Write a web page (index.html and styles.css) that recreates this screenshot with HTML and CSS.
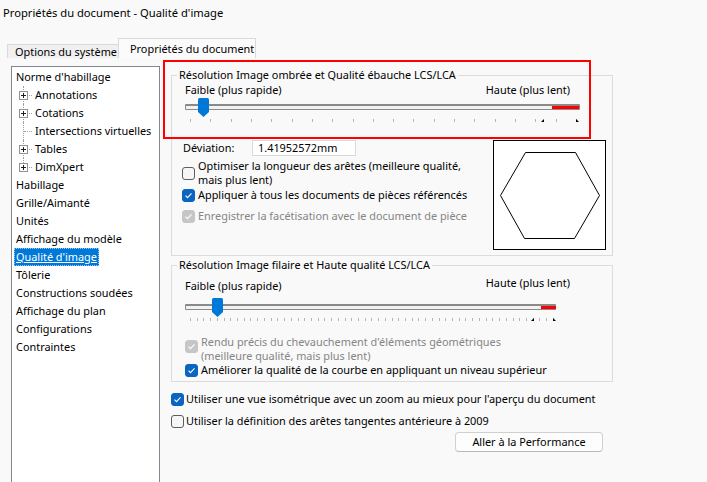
FILE: index.html
```html
<!DOCTYPE html>
<html lang="fr">
<head>
<meta charset="utf-8">
<title>Propriétés du document - Qualité d'image</title>
<link rel="stylesheet" href="styles.css">
</head>
<body>
<div class="window">
  <div class="title">Propriétés du document - Qualité d'image</div>
  <div class="tabs">
    <div class="tab">Options du système</div>
    <div class="tab active">Propriétés du document</div>
  </div>
  <div class="panel">
    <div class="tree">
      <div class="row">Norme d'habillage</div>
      <div class="row child"><span class="exp"></span>Annotations</div>
      <div class="row child"><span class="exp"></span>Cotations</div>
      <div class="row child">Intersections virtuelles</div>
      <div class="row child"><span class="exp"></span>Tables</div>
      <div class="row child last"><span class="exp"></span>DimXpert</div>
      <div class="row">Habillage</div>
      <div class="row">Grille/Aimanté</div>
      <div class="row">Unités</div>
      <div class="row">Affichage du modèle</div>
      <div class="row"><span class="sel">Qualité d'image</span></div>
      <div class="row">Tôlerie</div>
      <div class="row">Constructions soudées</div>
      <div class="row">Affichage du plan</div>
      <div class="row">Configurations</div>
      <div class="row">Contraintes</div>
    </div>
    <div class="content">
      <fieldset class="group g1">
        <legend>Résolution Image ombrée et Qualité ébauche LCS/LCA</legend>
        <div class="gin g1in">
          <div class="scale"><span>Faible (plus rapide)</span><span class="hi">Haute (plus lent)</span></div>
          <div class="slider s1">
            <div class="track"><div class="red"></div></div>
            <svg class="thumb" width="11" height="19" viewBox="0 0 11 19"><path d="M1.5 0H9.5Q11 0 11 1.5V14L5.5 19L0 14V1.5Q0 0 1.5 0Z"/></svg>
            <div class="ticks"><i></i><i></i><i></i><i></i><i></i><i></i><i></i><i></i><i></i><i></i><i></i><i></i><i></i><i></i><i></i><i></i><i></i><i></i><i></i><i></i></div>
            <span class="mk mk-a"></span><span class="mk mk-b"></span>
          </div>
          <div class="lower">
            <div class="opts">
              <div class="dev"><span class="devlabel">Déviation:</span><div class="input">1.41952572mm</div></div>
              <div class="check c-opt"><span class="cb"></span><span class="lbl">Optimiser la longueur des arêtes (meilleure qualité,<br>mais plus lent)</span></div>
              <div class="check c-app"><span class="cb on"><svg viewBox="0 0 11 11"><path d="M2.5 5.6L4.5 7.6L8.5 3.4"/></svg></span><span class="lbl">Appliquer à tous les documents de pièces référencés</span></div>
              <div class="check c-enr dis"><span class="cb off-dis"><svg viewBox="0 0 11 11"><path d="M2.5 5.6L4.5 7.6L8.5 3.4"/></svg></span><span class="lbl">Enregistrer la facétisation avec le document de pièce</span></div>
            </div>
            <div class="preview">
              <svg width="111" height="108" viewBox="0 0 111 108"><polygon points="31.5,11.5 81.5,11.5 105.5,54.5 80.5,97.5 30.5,97.5 6.5,54.5"/></svg>
            </div>
          </div>
        </div>
      </fieldset>

      <fieldset class="group g2">
        <legend>Résolution Image filaire et Haute qualité LCS/LCA</legend>
        <div class="gin g2in">
          <div class="scale"><span>Faible (plus rapide)</span><span class="hi up">Haute (plus lent)</span></div>
          <div class="slider s2">
            <div class="track"><div class="red"></div></div>
            <svg class="thumb" width="11" height="19" viewBox="0 0 11 19"><path d="M1.5 0H9.5Q11 0 11 1.5V14L5.5 19L0 14V1.5Q0 0 1.5 0Z"/></svg>
            <div class="ticks"><i></i><i></i><i></i><i></i><i></i><i></i><i></i><i></i><i></i><i></i><i></i><i></i><i></i><i></i><i></i><i></i><i></i><i></i><i></i><i></i><i></i><i></i><i></i><i></i><i></i><i></i><i></i><i></i><i></i><i></i><i></i><i></i><i></i><i></i><i></i><i></i><i></i><i></i><i></i><i></i><i></i><i></i><i></i><i></i><i></i><i></i><i></i><i></i><i></i><i></i><i></i><i></i><i></i><i></i><i></i></div>
            <span class="mk mk-a"></span><span class="mk mk-b"></span>
          </div>
          <div class="check c-ren dis"><span class="cb off-dis"><svg viewBox="0 0 11 11"><path d="M2.5 5.6L4.5 7.6L8.5 3.4"/></svg></span><span class="lbl">Rendu précis du chevauchement d'éléments géométriques<br>(meilleure qualité, mais plus lent)</span></div>
          <div class="check c-ame"><span class="cb on"><svg viewBox="0 0 11 11"><path d="M2.5 5.6L4.5 7.6L8.5 3.4"/></svg></span><span class="lbl">Améliorer la qualité de la courbe en appliquant un niveau supérieur</span></div>
        </div>
      </fieldset>

      <div class="check c-iso"><span class="cb on"><svg viewBox="0 0 11 11"><path d="M2.5 5.6L4.5 7.6L8.5 3.4"/></svg></span><span class="lbl">Utiliser une vue isométrique avec un zoom au mieux pour l'aperçu du document</span></div>
      <div class="check c-tan"><span class="cb"></span><span class="lbl">Utiliser la définition des arêtes tangentes antérieure à 2009</span></div>
      <div class="btnrow"><button class="btn" type="button">Aller à la Performance</button></div>
    </div>
    <div class="focus-box"></div>
  </div>
</div>
</body>
</html>
```
FILE: styles.css
```css
* { box-sizing: border-box; }
html, body { margin: 0; padding: 0; }
body {
  width: 707px;
  height: 482px;
  overflow: hidden;
  background: #f9f9f9;
  font-family: "Noto Sans", "Open Sans", sans-serif;
  font-size: 10.9px;
  color: #000;
}
.window { position: relative; height: 482px; }

.title {
  height: 26px;
  line-height: 26px;
  padding-left: 3px;
  font-size: 11.2px;
  white-space: nowrap;
}

.tabs {
  display: flex;
  align-items: flex-end;
  height: 20px;
  margin-top: 12px;
  padding-left: 7px;
}
.tab {
  height: 14px;
  width: 112px;
  padding-left: 7px;
  line-height: 13px;
  border: 1px solid #dadada;
  border-bottom: 0;
  background: #f0f0f0;
  white-space: nowrap;
}
.tab.active {
  height: 20px;
  width: 138px;
  margin-left: -1px;
  padding-left: 11px;
  line-height: 19px;
  background: #fbfbfb;
}

.panel {
  position: relative;
  display: flex;
  height: 424px;
}

/* tree */
.tree {
  flex: none;
  width: 149px;
  height: 430px;
  margin: 8px 0 0 11px;
  border: 1px solid #828790;
  background: #fff;
  padding-top: 1px;
}
.row {
  position: relative;
  height: 18px;
  line-height: 18px;
  padding-left: 4px;
  white-space: nowrap;
}
.row.child { padding-left: 23px; }
.row.child::before {
  content: "";
  position: absolute;
  left: 11px;
  top: 0;
  height: 18px;
  border-left: 1px dotted #a0a0a0;
}
.row.child.last::before { height: 9px; }
.row.child::after {
  content: "";
  position: absolute;
  left: 12px;
  top: 9px;
  width: 8px;
  border-top: 1px dotted #a0a0a0;
}
.exp {
  position: absolute;
  left: 7px;
  top: 5px;
  width: 9px;
  height: 9px;
  border: 1px solid #919191;
  background: #fff;
  z-index: 1;
}
.exp::before, .exp::after {
  content: "";
  position: absolute;
  background: #1e1e1e;
}
.exp::before { left: 1px; top: 3px; width: 5px; height: 1px; }
.exp::after { left: 3px; top: 1px; width: 1px; height: 5px; }
.sel {
  display: inline-block;
  margin-left: -2px;
  padding: 0 2px;
  height: 18px;
  background: #0078d7;
  color: #fff;
  text-decoration: underline;
  outline: 1px dotted #9fcbf2;
  outline-offset: -1px;
}

/* content */
.content {
  flex: none;
  width: 547px;
  padding: 10px 0 0 11px;
}
.group {
  margin: 0;
  padding: 0;
  width: 442px;
  border: 1px solid #dcdcdc;
  min-width: 0;
}
.group legend {
  margin-left: 5px;
  padding: 0 2px;
  height: 14px;
  line-height: 14px;
  white-space: nowrap;
}
.g1 { height: 188px; }
.g2 { height: 124px; margin-top: 2px; }

.g1in { padding-left: 10px; }
.g2in { padding-left: 13px; }

.scale {
  display: flex;
  justify-content: space-between;
  align-items: flex-start;
  width: 385px;
  height: 14px;
  line-height: 14px;
  white-space: nowrap;
}
.g1in .scale { margin: 1px 0 0 3px; }
.g2in .scale { margin-top: 7px; }
.scale .up { margin-top: -3px; }

.slider {
  position: relative;
  display: flow-root;
  height: 26px;
  padding-top: 6px;
}
.s1 { width: 395px; margin: 1px 0 0 3px; }
.s2 { width: 371px; margin-top: 5px; }
.track {
  position: relative;
  height: 6px;
  border: 1px solid #8a8a8a;
  border-top: 2px solid #8a8a8a;
  border-radius: 1px;
  background: #f2f2f2;
}
.red {
  position: absolute;
  top: 0;
  bottom: 0;
  background: #f00;
}
.s1 .red { left: 366px; width: 27px; }
.s2 .red { left: 355px; width: 15px; }
.thumb {
  position: absolute;
  top: 0;
  fill: #0078d7;
}
.s1 .thumb { left: 13px; }
.s2 .thumb { left: 27px; }
.ticks {
  display: flex;
  justify-content: space-between;
  height: 3px;
  margin: 9px 0 0 5px;
}
.s1 .ticks { width: 387px; }
.s2 .ticks { width: 364px; margin-top: 8px; }
.ticks i {
  display: block;
  width: 1px;
  height: 3px;
  background: #b4b4b4;
}
.mk {
  position: absolute;
  top: 21px;
  width: 0;
  height: 0;
  border-bottom: 3px solid #000;
}
.s2 .mk { top: 20px; }
.mk-a { border-left: 3px solid transparent; }
.mk-b { border-right: 3px solid transparent; }
.s1 .mk-a { left: 356px; }
.s1 .mk-b { left: 391px; }
.s2 .mk-a { left: 346px; }
.s2 .mk-b { left: 368px; }

.lower {
  display: flex;
  margin-top: 16px;
}
.opts { width: 311px; flex: none; }
.dev {
  display: flex;
  align-items: center;
  height: 16px;
}
.devlabel { width: 70px; padding-left: 1px; line-height: 14px; }
.input {
  width: 104px;
  height: 16px;
  border: 1px solid #d9d9d9;
  background: #fff;
  padding-left: 5px;
  line-height: 14px;
  white-space: nowrap;
}
.preview {
  flex: none;
  width: 113px;
  height: 110px;
  border: 1px solid #000;
  background: #fff;
}
.preview svg { display: block; }
.preview polygon { fill: none; stroke: #000; stroke-width: 1; }

.check {
  display: flex;
  align-items: center;
  gap: 3px;
  line-height: 14px;
  white-space: nowrap;
}
.check .lbl { display: block; }
.check.dis .lbl { color: #858585; }
.cb {
  flex: none;
  display: block;
  width: 13px;
  height: 13px;
  border: 1px solid #5d5d5d;
  border-radius: 3px;
  background: #f6f6f6;
}
.cb svg { display: block; width: 11px; height: 11px; }
.cb path { fill: none; stroke: #fff; stroke-width: 1.1; }
.cb.on { background: #0a64c2; border-color: #0a64c2; }
.cb.off-dis { background: #c6c6c6; border-color: #c6c6c6; }

.c-opt { margin-top: 3px; }
.c-app { margin-top: 1px; }
.c-enr { margin-top: 7px; }
.c-ren { margin-top: 11px; align-items: flex-start; }
.c-ren .cb { margin-top: 5px; }
.c-ame { margin-top: 0; }
.c-iso { margin-top: 10px; gap: 2px; }
.c-tan { margin-top: 8px; gap: 2px; }

.btnrow { margin-top: 4px; }
.btn {
  display: block;
  margin-left: 284px;
  width: 148px;
  height: 20px;
  padding: 0;
  border: 1px solid #d0d0d0;
  border-bottom-color: #b8b8b8;
  border-radius: 4px;
  background: #fdfdfd;
  font: inherit;
  color: #000;
  line-height: 18px;
}

.focus-box {
  position: absolute;
  left: 163px;
  top: 2px;
  width: 428px;
  height: 79px;
  border: 2px solid #f00;
}
```
